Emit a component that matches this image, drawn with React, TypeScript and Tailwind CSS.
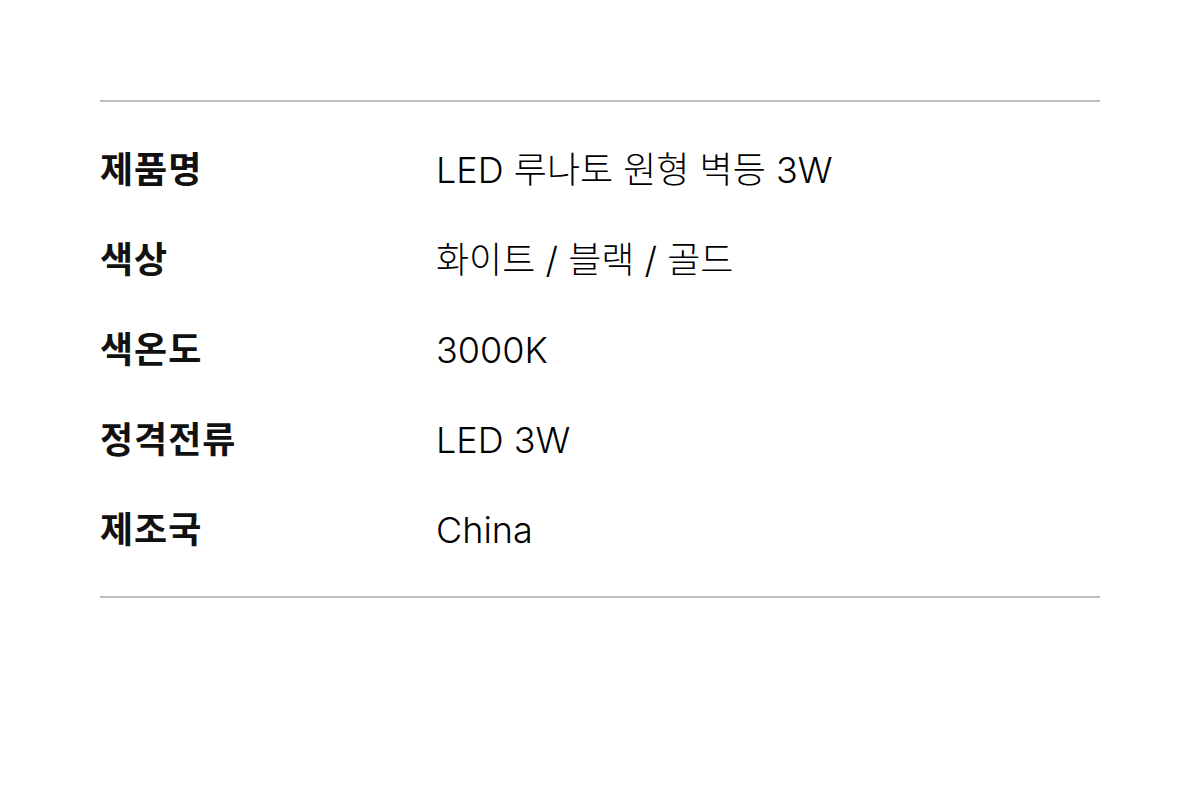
const specs = [
  { label: "제품명", value: "LED 루나토 원형 벽등 3W" },
  { label: "색상", value: "화이트 / 블랙 / 골드" },
  { label: "색온도", value: "3000K" },
  { label: "정격전류", value: "LED 3W" },
  { label: "제조국", value: "China" },
];

export default function App() {
  return (
    <div
      className="w-[1200px] h-[801px] bg-white pt-[100px] px-[100px]"
      style={{ fontFamily: 'Inter, "Noto Sans CJK KR", sans-serif' }}
    >
      <div className="border-t-2 border-b-2 border-[#bdbdbd] pt-[23px] pb-[21px]">
        {specs.map((row) => (
          <div key={row.label} className="flex items-center h-[90px]">
            <div className="w-[336px] text-[36px] font-semibold text-[#111] tracking-[1px]">
              {row.label}
            </div>
            <div className="text-[36px] font-light text-black">
              {row.value}
            </div>
          </div>
        ))}
      </div>
    </div>
  );
}
